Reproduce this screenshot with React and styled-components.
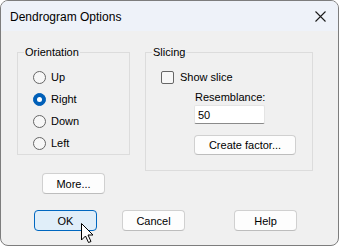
import React, { useState } from 'react';
import styled, { createGlobalStyle } from 'styled-components';

const GlobalStyle = createGlobalStyle`
  html, body {
    margin: 0;
    padding: 0;
    background: #ffffff;
  }
  body {
    font-family: 'Liberation Sans', Arial, sans-serif;
    font-size: 11px;
    color: #000000;
  }
  * {
    box-sizing: border-box;
  }
`;

const Window = styled.div`
  position: relative;
  width: 339px;
  height: 246px;
  border: 1px solid #7d7d7d;
  border-radius: 8px;
  background: #f0f0f0;
  overflow: hidden;
  display: flex;
  flex-direction: column;
`;

const TitleBar = styled.div`
  height: 30px;
  flex: none;
  display: flex;
  align-items: center;
  justify-content: space-between;
  padding: 0 8px 0 9px;
  background: #eef2f9;
  font-size: 12px;
`;

const Title = styled.span`
  margin-top: 1px;
`;

const CloseButton = styled.button`
  width: 20px;
  height: 20px;
  padding: 0;
  border: none;
  background: transparent;
  display: flex;
  align-items: center;
  justify-content: center;
  margin-top: 1px;
`;

const Body = styled.div`
  flex: 1;
  padding: 13px 0 0 16px;
  display: flex;
  flex-direction: column;
`;

const TopRow = styled.div`
  display: flex;
  align-items: flex-start;
  gap: 15px;
`;

const LeftColumn = styled.div`
  display: flex;
  flex-direction: column;
  align-items: flex-start;
`;

const Group = styled.fieldset`
  margin: 0;
  width: ${(p) => p.$width}px;
  height: ${(p) => p.$height}px;
  border: 1px solid #dcdcdc;
  padding: ${(p) => p.$padding};
  display: flex;
  flex-direction: column;
  gap: ${(p) => p.$gap || 0}px;
`;

const Legend = styled.legend`
  padding: 0 1px;
  margin-left: -9px;
  line-height: 16px;
  font-size: 11px;
`;

const OptionRow = styled.label`
  display: flex;
  align-items: center;
  height: 16px;
  gap: 5px;
`;

const RadioDot = styled.span`
  width: 13px;
  height: 13px;
  border-radius: 50%;
  flex: none;
  border: 1px solid ${(p) => (p.$checked ? '#005fb8' : '#666666')};
  background: ${(p) => (p.$checked ? '#005fb8' : '#f7f7f7')};
  display: flex;
  align-items: center;
  justify-content: center;
  &::after {
    content: '';
    width: 5px;
    height: 5px;
    border-radius: 50%;
    background: #ffffff;
    display: ${(p) => (p.$checked ? 'block' : 'none')};
  }
`;

const CheckBox = styled.span`
  width: 13px;
  height: 13px;
  flex: none;
  border: 1px solid #666666;
  border-radius: 2px;
  background: #f7f7f7;
  margin-right: 1px;
`;

const SubBlock = styled.div`
  margin-left: 33px;
  display: flex;
  flex-direction: column;
  align-items: flex-start;
`;

const FieldLabel = styled.div`
  line-height: 16px;
  margin-top: 4px;
  padding-left: 1px;
`;

const TextBox = styled.input`
  width: 71px;
  height: 19px;
  margin-top: 0;
  border: 1px solid #e4e4e4;
  border-bottom-color: #8a8a8a;
  border-radius: 2px;
  background: #ffffff;
  font: inherit;
  padding: 0 3px;
  outline: none;
`;

const Button = styled.button`
  width: ${(p) => p.$width || 63}px;
  height: ${(p) => p.$height || 21}px;
  margin: ${(p) => p.$margin || 0};
  padding: 0;
  border: 1px solid ${(p) => (p.$primary ? '#0067c0' : '#d0d0d0')};
  border-bottom-color: ${(p) => (p.$primary ? '#0067c0' : '#bdbdbd')};
  border-radius: 4px;
  background: ${(p) => (p.$primary ? '#e0eef9' : '#fdfdfd')};
  font-family: 'Liberation Sans', Arial, sans-serif;
  font-size: 11px;
  color: #000000;
  flex: none;
`;

const ButtonRow = styled.div`
  display: flex;
  margin-top: 16px;
  padding-left: 17px;
`;

const Cursor = styled.svg`
  position: absolute;
  left: 80px;
  top: 222px;
`;

const orientations = ['Up', 'Right', 'Down', 'Left'];

export default function App() {
  const [orientation, setOrientation] = useState('Right');

  return (
    <>
      <GlobalStyle />
      <Window>
        <TitleBar>
          <Title>Dendrogram Options</Title>
          <CloseButton aria-label="Close">
            <svg width="11" height="11" viewBox="0 0 11 11">
              <path d="M0.5 0.5 L10.5 10.5 M10.5 0.5 L0.5 10.5" stroke="#1b1b1b" strokeWidth="1.1" />
            </svg>
          </CloseButton>
        </TitleBar>
        <Body>
          <TopRow>
            <LeftColumn>
              <Group $width={113} $height={111} $padding="9px 0 0 15px" $gap={6}>
                <Legend>Orientation</Legend>
                {orientations.map((o) => (
                  <OptionRow key={o} onClick={() => setOrientation(o)}>
                    <RadioDot $checked={orientation === o} />
                    {o}
                  </OptionRow>
                ))}
              </Group>
              <Button $margin="18px 0 0 25px">More...</Button>
            </LeftColumn>
            <Group $width={168} $height={127} $padding="9px 0 0 15px">
              <Legend>Slicing</Legend>
              <OptionRow>
                <CheckBox />
                Show slice
              </OptionRow>
              <SubBlock>
                <FieldLabel>Resemblance:</FieldLabel>
                <TextBox defaultValue="50" />
                <Button $width={102} $height={20} $margin="11px 0 0 0">
                  Create factor...
                </Button>
              </SubBlock>
            </Group>
          </TopRow>
          <ButtonRow>
            <Button $primary>OK</Button>
            <Button $margin="0 0 0 25px">Cancel</Button>
            <Button $margin="0 0 0 49px">Help</Button>
          </ButtonRow>
        </Body>
        <Cursor width="13" height="21" viewBox="0 0 13 21">
          <path
            d="M0.5 0.5 L0.5 17 L4.5 13 L7.5 19.5 L10 18.5 L7 12 L12 12 Z"
            fill="#ffffff"
            stroke="#000000"
            strokeWidth="1"
            strokeLinejoin="round"
          />
        </Cursor>
      </Window>
    </>
  );
}
